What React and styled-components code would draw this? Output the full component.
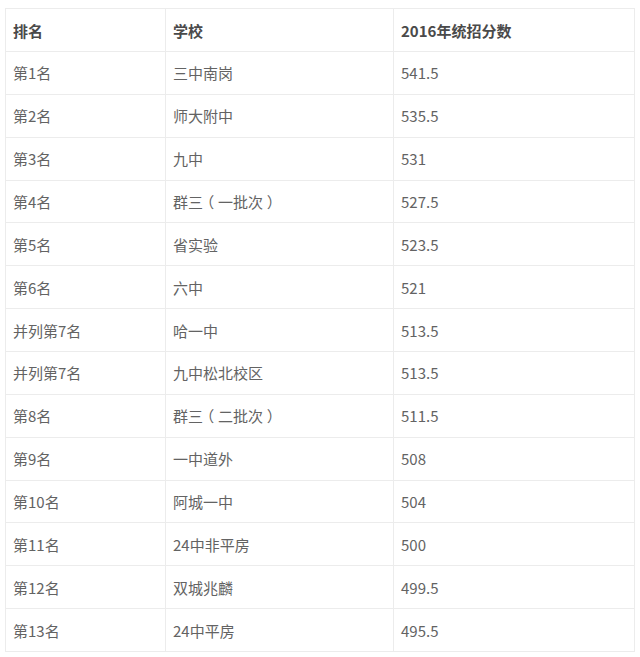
import styled, { createGlobalStyle } from 'styled-components';

const rows = [
  ['第1名', '三中南岗', '541.5'],
  ['第2名', '师大附中', '535.5'],
  ['第3名', '九中', '531'],
  ['第4名', '群三（一批次）', '527.5'],
  ['第5名', '省实验', '523.5'],
  ['第6名', '六中', '521'],
  ['并列第7名', '哈一中', '513.5'],
  ['并列第7名', '九中松北校区', '513.5'],
  ['第8名', '群三（二批次）', '511.5'],
  ['第9名', '一中道外', '508'],
  ['第10名', '阿城一中', '504'],
  ['第11名', '24中非平房', '500'],
  ['第12名', '双城兆麟', '499.5'],
  ['第13名', '24中平房', '495.5'],
];

// fullwidth brackets sit centred in their box in the original
const renderText = (text) =>
  text.split(/([（）])/).map((part, i) =>
    part === '（' || part === '）' ? <StParen key={i}>{part}</StParen> : part
  );

function App() {
  return (
    <StWrapper>
      <GlobalStyle />
      <StTable>
        <colgroup>
          <col style={{ width: 160 }} />
          <col style={{ width: 228 }} />
          <col style={{ width: 241 }} />
        </colgroup>
        <thead>
          <tr>
            <StHeadCell>排名</StHeadCell>
            <StHeadCell>学校</StHeadCell>
            <StHeadCell>2016年统招分数</StHeadCell>
          </tr>
        </thead>
        <tbody>
          {rows.map((row, i) => (
            <tr key={i}>
              {row.map((cell, j) => (
                <StCell key={j}>{renderText(cell)}</StCell>
              ))}
            </tr>
          ))}
        </tbody>
      </StTable>
    </StWrapper>
  );
}

export default App;

const GlobalStyle = createGlobalStyle`
  body {
    margin: 0;
    background: #fff;
    font-family: "Noto Sans CJK SC", "Noto Sans", sans-serif;
  }
`;

const StWrapper = styled.div`
  width: 640px;
  height: 657px;
  padding: 8px 0 0 5px;
  box-sizing: border-box;
  overflow: hidden;
`;

const StTable = styled.table`
  width: 629px;
  border-collapse: collapse;
  table-layout: fixed;
`;

const StHeadCell = styled.th`
  height: 43px;
  padding: 0 0 0 7px;
  border: 1px solid #ececec;
  text-align: left;
  font-size: 15px;
  font-weight: bold;
  color: #4a4a4a;
  box-sizing: border-box;
`;

const StCell = styled.td`
  height: 42.86px;
  padding: 0 0 0 7px;
  border: 1px solid #ececec;
  font-size: 15px;
  color: #636363;
  box-sizing: border-box;
`;

const StParen = styled.span`
  font-feature-settings: "halt" 1;
  padding: 0 0.25em;
`;
